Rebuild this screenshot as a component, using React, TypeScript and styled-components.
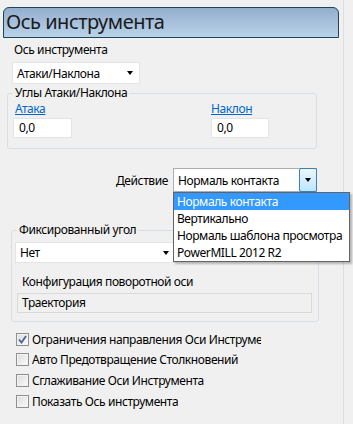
import React from "react";
import styled, { createGlobalStyle } from "styled-components";

const Global = createGlobalStyle`
  html, body { margin: 0; padding: 0; background: #f0f0f0; }
  body {
    font-family: "Noto Sans", "Open Sans", sans-serif;
    font-size: 12px;
    letter-spacing: -0.4px;
    color: #000;
  }
  * { box-sizing: border-box; }
`;

const Root = styled.div`
  width: 353px;
  height: 424px;
  overflow: hidden;
  background: #f0f0f0;
  display: flex;
`;

const Panel = styled.div`
  width: 344px;
  height: 100%;
  border-right: 1px solid #dedede;
  display: flex;
  flex-direction: column;
  align-items: flex-start;
  padding-top: 7px;
`;

const Header = styled.div`
  margin-left: 3px;
  width: 336px;
  height: 31px;
  border: 1px solid #1b4656;
  border-radius: 6px 6px 0 0;
  background: linear-gradient(#93aecd, #bad3ea);
  font-size: 20px;
  letter-spacing: -0.5px;
  line-height: 28px;
  padding-left: 2px;
  color: #1a1a1a;
`;

const Label = styled.div<{ $ml: number; $mt: number }>`
  margin-left: ${(p) => p.$ml}px;
  margin-top: ${(p) => p.$mt}px;
  line-height: 16px;
  white-space: nowrap;
`;

const Combo = styled.div<{ $w: number; $h: number; $ml?: number; $mt?: number }>`
  position: relative;
  width: ${(p) => p.$w}px;
  height: ${(p) => p.$h}px;
  margin-left: ${(p) => p.$ml ?? 0}px;
  margin-top: ${(p) => p.$mt ?? 0}px;
  background: #fff;
  border: 1px solid #e4e4e4;
  display: flex;
  align-items: center;
  padding-left: 4px;
  white-space: nowrap;
`;

const ComboText = styled.span`
  flex: 1;
`;

const Arrow = styled.span`
  width: 0;
  height: 0;
  border-left: 3.5px solid transparent;
  border-right: 3.5px solid transparent;
  border-top: 4px solid #000;
  margin-right: 6px;
`;

const DropButton = styled.div`
  width: 18px;
  height: calc(100% + 2px);
  margin: -1px -1px -1px 0;
  border: 1px solid #3c7fb1;
  border-radius: 2px;
  background: linear-gradient(#eaf6fd, #bee6fd);
  display: flex;
  align-items: center;
  justify-content: center;
  & > span { margin-right: 0; }
`;

const Group = styled.fieldset<{ $ml: number; $w: number; $mt: number; $pb: number }>`
  margin: ${(p) => p.$mt}px 0 0 ${(p) => p.$ml}px;
  width: ${(p) => p.$w}px;
  padding: 0 0 ${(p) => p.$pb}px 0;
  border: 1px solid #d5dfe5;
  border-radius: 3px;
  min-width: 0;
`;

const Legend = styled.legend<{ $ml: number }>`
  margin-left: ${(p) => p.$ml}px;
  padding: 0 2px;
  line-height: 16px;
`;

const AnglesGrid = styled.div`
  display: grid;
  grid-template-columns: 198px 1fr;
  padding: 1px 0 0 5px;
`;

const Col = styled.div`
  display: flex;
  flex-direction: column;
  align-items: flex-start;
`;

const Link = styled.a<{ $ml: number }>`
  margin-left: ${(p) => p.$ml}px;
  color: #0066cc;
  text-decoration: underline;
  line-height: 14px;
  cursor: pointer;
`;

const NumInput = styled.div<{ $w: number }>`
  margin-top: 2px;
  width: ${(p) => p.$w}px;
  height: 20px;
  background: #fff;
  border: 1px solid #e4e4e4;
  padding-left: 5px;
  line-height: 18px;
`;

const ActionRow = styled.div`
  margin: 19px 0 0 116px;
  display: flex;
  align-items: center;
  gap: 5px;
`;

const ActionCombo = styled(Combo)`
  border-color: #abadb3;
  padding-left: 4px;
`;

const DropList = styled.div`
  position: absolute;
  top: calc(100% + 1px);
  left: -1px;
  width: 177px;
  background: #fff;
  border: 1px solid #646464;
  box-shadow: 2px 2px 2px rgba(0, 0, 0, 0.25);
  z-index: 5;
  display: flex;
  flex-direction: column;
`;

const DropItem = styled.div<{ $sel?: boolean }>`
  height: 17px;
  line-height: 17px;
  padding-left: 3px;
  background: ${(p) => (p.$sel ? "#3399ff" : "#fff")};
  color: ${(p) => (p.$sel ? "#fff" : "#000")};
  white-space: nowrap;
`;

const Group2Body = styled.div`
  display: flex;
  flex-direction: column;
  align-items: flex-start;
  padding-left: 3px;
`;

const ReadBox = styled.div`
  margin: 3px 0 0 2px;
  width: 295px;
  height: 20px;
  border: 1px solid #d9d9d9;
  background: #f0f0f0;
  padding-left: 4px;
  line-height: 18px;
`;

const Checks = styled.div`
  margin: 7px 0 0 16px;
  display: flex;
  flex-direction: column;
`;

const CheckRow = styled.div`
  height: 20.6px;
  display: flex;
  align-items: center;
  gap: 3px;
`;

const Box = styled.span`
  width: 13px;
  height: 13px;
  border: 1px solid #8e8f8f;
  background: linear-gradient(135deg, #dcdcdc, #fbfbfb);
  box-shadow: inset 0 0 0 1px #f4f4f4;
  display: flex;
  align-items: center;
  justify-content: center;
`;

const CheckText = styled.span`
  max-width: 229px;
  overflow: hidden;
  white-space: nowrap;
`;

function CheckBox({ checked, text }: { checked?: boolean; text: string }) {
  return (
    <CheckRow>
      <Box>
        {checked && (
          <svg width="9" height="9" viewBox="0 0 9 9">
            <path d="M1 4.5 L3.5 7.5 L8 1" fill="none" stroke="#4a5f97" strokeWidth="1.8" />
          </svg>
        )}
      </Box>
      <CheckText>{text}</CheckText>
    </CheckRow>
  );
}

export default function App() {
  return (
    <Root>
      <Global />
      <Panel>
        <Header>Ось инструмента</Header>
        <Label $ml={14} $mt={4}>Ось инструмента</Label>
        <Combo $w={128} $h={22} $ml={12} $mt={4}>
          <ComboText>Атаки/Наклона</ComboText>
          <Arrow />
        </Combo>
        <Group $ml={7} $w={310} $mt={1} $pb={10}>
          <Legend $ml={5}>Углы Атаки/Наклона</Legend>
          <AnglesGrid>
            <Col>
              <Link $ml={2}>Атака</Link>
              <NumInput $w={59}>0,0</NumInput>
            </Col>
            <Col>
              <Link $ml={0}>Наклон</Link>
              <NumInput $w={58}>0,0</NumInput>
            </Col>
          </AnglesGrid>
        </Group>
        <ActionRow>
          <span>Действие</span>
          <ActionCombo $w={144} $h={24}>
            <ComboText>Нормаль контакта</ComboText>
            <DropButton>
              <Arrow />
            </DropButton>
            <DropList>
              <DropItem $sel>Нормаль контакта</DropItem>
              <DropItem>Вертикально</DropItem>
              <DropItem>Нормаль шаблона просмотра</DropItem>
              <DropItem>PowerMILL 2012 R2</DropItem>
            </DropList>
          </ActionCombo>
        </ActionRow>
        <Group $ml={11} $w={308} $mt={30} $pb={8}>
          <Legend $ml={5}>Фиксированный угол</Legend>
          <Group2Body>
            <Combo $w={161} $h={21} $mt={4}>
              <ComboText>Нет</ComboText>
              <Arrow />
            </Combo>
            <Label $ml={7} $mt={11}>Конфигурация поворотной оси</Label>
            <ReadBox>Траектория</ReadBox>
          </Group2Body>
        </Group>
        <Checks>
          <CheckBox checked text="Ограничения направления Оси Инструмента" />
          <CheckBox text="Авто Предотвращение Столкновений" />
          <CheckBox text="Сглаживание Оси Инструмента" />
          <CheckBox text="Показать Ось инструмента" />
        </Checks>
      </Panel>
    </Root>
  );
}
